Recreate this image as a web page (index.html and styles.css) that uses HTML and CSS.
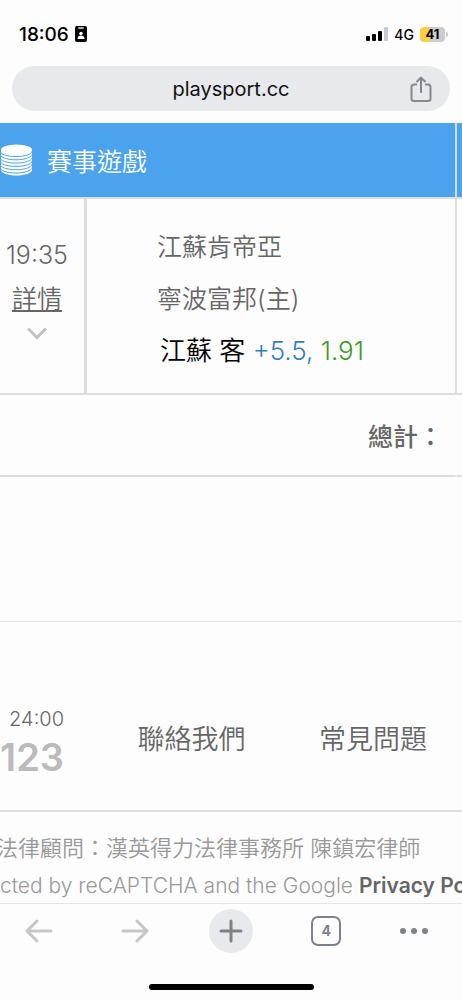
FILE: index.html
```
<!DOCTYPE html>
<html lang="zh-Hant">
<head>
    <meta charset="UTF-8">
    <meta name="viewport" content="width=device-width, initial-scale=1.0">
    <title>playsport.cc</title>
    <link rel="stylesheet" href="styles.css">
</head>
<body>
    <header class="status-bar">
        <div class="status-left">
            <span class="clock">18:06</span>
            <svg class="badge-icon" width="12" height="16" viewBox="0 0 12 16">
                <rect width="12" height="16" rx="2" fill="#000"/>
                <rect x="3" y="1" width="6" height="2" rx="1" fill="#aaa"/>
                <circle cx="6" cy="7.500" r="1.700" fill="#fff"/>
                <path d="M2.500 13c0-2.500 1.500-3.500 3.500-3.500s3.500 1 3.500 3.500z" fill="#fff"/>
            </svg>
        </div>
        <div class="status-right">
            <svg width="22" height="14" viewBox="0 0 22 14">
                <rect x="0" y="9" width="4" height="5" rx="1"/>
                <rect x="6" y="7" width="4" height="7" rx="1"/>
                <rect x="12" y="4" width="4" height="10" rx="1"/>
                <rect x="18" y="0" width="4" height="14" rx="1" fill="#ccc"/>
            </svg>
            <span class="network">4G</span>
            <span class="battery">41</span>
        </div>
    </header>

    <div class="address-bar">
        <span class="url">playsport.cc</span>
        <button type="button" class="share-btn" aria-label="分享">
            <svg width="22" height="26" viewBox="0 0 22 26" fill="none" stroke="#85898f" stroke-width="2">
                <path d="M7 8.500H4a2.500 2.500 0 0 0-2.500 2.500v11.500A2.500 2.500 0 0 0 4 25h14a2.500 2.500 0 0 0 2.500-2.500V11A2.500 2.500 0 0 0 18 8.500h-3M11 17V2M6.500 6 11 1.700 15.500 6"/>
            </svg>
        </button>
    </div>

    <main class="page">
        <table class="bets">
            <colgroup>
                <col class="col-time">
                <col>
                <col class="col-next">
            </colgroup>
            <thead>
                <tr>
                    <th colspan="2">
                        <div class="bets-title">
                            <svg width="32" height="32" viewBox="0 0 32 32">
                                <path d="M1 6v20c0 3 7 5.500 15.500 5.500S32 29 32 26V6z" fill="#fff"/>
                                <g fill="none" stroke="#4aa3ec" stroke-width="1">
                                    <path d="M0 7c0 3 7 5.500 16 5.500S32 10 32 7"/>
                                    <path d="M0 10.300c0 3 7 5.500 16 5.500s16-2.500 16-5.500"/>
                                    <path d="M0 13.600c0 3 7 5.500 16 5.500s16-2.500 16-5.500"/>
                                    <path d="M0 16.900c0 3 7 5.500 16 5.500s16-2.500 16-5.500"/>
                                    <path d="M0 20.200c0 3 7 5.500 16 5.500s16-2.500 16-5.500"/>
                                    <path d="M0 23.500c0 3 7 5.500 16 5.500s16-2.500 16-5.500"/>
                                </g>
                                <ellipse cx="16.500" cy="6" rx="15.500" ry="5.500" fill="#fff"/>
                            </svg>
                            <span>賽事遊戲</span>
                        </div>
                    </th>
                    <th></th>
                </tr>
            </thead>
            <tbody>
                <tr class="bet-row">
                    <td class="time-cell">
                        <div class="time">19:35</div>
                        <a href="#" class="detail-link">詳情</a>
                        <svg class="chevron" width="20" height="13" viewBox="0 0 20 13" fill="none" stroke="#c0c0c0" stroke-width="3">
                            <path d="M1 1.500 10 10.500 19 1.500"/>
                        </svg>
                    </td>
                    <td class="match-cell">
                        <div class="team">江蘇肯帝亞</div>
                        <div class="team">寧波富邦(主)</div>
                        <div class="pick">江蘇 客 <span class="spread">+5.5,</span> <span class="odds">1.91</span></div>
                    </td>
                    <td></td>
                </tr>
                <tr class="total-row">
                    <td colspan="2">總計：</td>
                    <td></td>
                </tr>
            </tbody>
        </table>

        <footer class="site-footer">
            <div class="footer-links">
                <div class="service">
                    <div class="hours">24:00</div>
                    <div class="phone">123</div>
                </div>
                <a href="#">聯絡我們</a>
                <a href="#">常見問題</a>
            </div>
            <div class="legal">
                <p class="counsel">法律顧問：漢英得力法律事務所 陳鎮宏律師</p>
                <p class="recaptcha">cted by reCAPTCHA and the Google <a href="#">Privacy Po</a></p>
            </div>
        </footer>
    </main>

    <nav class="toolbar">
        <button type="button" aria-label="返回">
            <svg width="28" height="24" viewBox="0 0 28 24" fill="none" stroke="#c6c7c9" stroke-width="3" stroke-linecap="round" stroke-linejoin="round">
                <path d="M26 12H2M12 2 2 12l10 10"/>
            </svg>
        </button>
        <button type="button" aria-label="前進">
            <svg width="28" height="24" viewBox="0 0 28 24" fill="none" stroke="#c6c7c9" stroke-width="3" stroke-linecap="round" stroke-linejoin="round">
                <path d="M2 12h24M16 2l10 10-10 10"/>
            </svg>
        </button>
        <button type="button" class="new-tab" aria-label="新分頁">
            <svg width="24" height="24" viewBox="0 0 24 24" fill="none" stroke="#7d828a" stroke-width="3" stroke-linecap="round">
                <path d="M2 12h20M12 2v20"/>
            </svg>
        </button>
        <button type="button" aria-label="分頁"><span class="tab-count">4</span></button>
        <button type="button" class="more" aria-label="更多">
            <svg width="28" height="6" viewBox="0 0 28 6" fill="#7d828a">
                <circle cx="3" cy="3" r="3"/>
                <circle cx="14" cy="3" r="3"/>
                <circle cx="25" cy="3" r="3"/>
            </svg>
        </button>
    </nav>
    <div class="home-indicator"></div>
</body>
</html>
```

FILE: styles.css
```
* {
    margin: 0;
    padding: 0;
    box-sizing: border-box;
}

body {
    font-family: Inter, "Noto Sans CJK TC", sans-serif;
    background: #fdfdfd;
    color: #666;
    min-height: 100vh;
    display: flex;
    flex-direction: column;
    overflow-x: hidden;
}

svg {
    display: block;
    flex-shrink: 0;
}

button {
    background: none;
    border: none;
    cursor: pointer;
}

a {
    color: inherit;
    text-decoration: none;
}

/* Status bar */
.status-bar {
    display: flex;
    justify-content: space-between;
    align-items: center;
    height: 66px;
    padding: 2px 17px 0 19px;
    color: #000;
}

.status-left,
.status-right {
    display: flex;
    align-items: center;
    gap: 6px;
}

.clock {
    font-size: 19px;
    font-weight: 500;
}

.network {
    font-size: 14px;
    font-weight: 500;
}

.battery {
    position: relative;
    width: 25px;
    border-radius: 4px;
    background: linear-gradient(90deg, #f8ce46 41%, #ccc 41%);
    font-size: 13px;
    font-weight: 700;
    line-height: 15px;
    text-align: center;
}

.battery::after {
    content: "";
    position: absolute;
    top: 5px;
    right: -3px;
    width: 2px;
    height: 5px;
    border-radius: 0 2px 2px 0;
    background: #ccc;
}

/* Address bar */
.address-bar {
    display: grid;
    grid-template-columns: 1fr auto 1fr;
    align-items: center;
    height: 45px;
    margin: 0 12px 12px;
    padding: 0 18px;
    border-radius: 24px;
    background: #e8e9ed;
}

.url {
    grid-column: 2;
    color: #111;
    font-size: 20px;
}

.share-btn {
    justify-self: end;
}

/* Bets table */
.page {
    flex: 1;
    display: flex;
    flex-direction: column;
    overflow: hidden;
}

.bets {
    width: 100%;
    table-layout: fixed;
    border-collapse: separate;
    border-spacing: 0;
    font-size: 25px;
    font-weight: 350;
}

.col-time {
    width: 87px;
}

.col-next {
    width: 5px;
}

.bets th,
.bets td {
    border-bottom: 2px solid #ddd;
}

.bets th {
    height: 76px;
    background: #4aa3ec;
    color: #fff;
    font-weight: 350;
}

.bets th:first-child,
.match-cell {
    border-right: 2px solid #ddd;
}

.bets-title {
    display: flex;
    align-items: center;
    gap: 15px;
}

.bet-row td {
    height: 196px;
    vertical-align: top;
}

.bets .time-cell {
    padding-top: 34px;
    padding-right: 10px;
    border-right: 3px solid #ddd;
    line-height: 44px;
    text-align: center;
}

.detail-link {
    text-decoration: underline;
    text-decoration-thickness: 2px;
    text-underline-offset: 2px;
}

.chevron {
    margin: 6px auto 0;
}

.bets .match-cell {
    padding: 22px 0 0 70px;
    line-height: 52px;
    white-space: nowrap;
}

.pick {
    padding-left: 3px;
    color: #000;
    font-size: 26px;
}

.spread {
    color: #337dc4;
}

.odds {
    color: #3e9b27;
}

.total-row td {
    height: 82px;
    padding-right: 12px;
    font-weight: 500;
    text-align: right;
}

.total-row td:first-child {
    border-right: 2px solid #fdfdfd;
}

/* Footer */
.site-footer {
    margin-top: 144px;
    border-top: 1px solid #e4e4e4;
}

.footer-links {
    display: flex;
    justify-content: space-between;
    height: 190px;
    padding: 83px 35px 0 0;
    border-bottom: 2px solid #ddd;
    font-size: 27px;
    font-weight: 350;
    line-height: 70px;
}

.service {
    width: 64px;
    text-align: right;
}

.hours {
    font-size: 20px;
    line-height: 28px;
}

.phone {
    color: #bbb;
    font-size: 38px;
    font-weight: 600;
    line-height: 48px;
}

.legal {
    padding-top: 16px;
    color: #999;
    white-space: nowrap;
}

.counsel {
    margin-left: -4px;
    font-size: 22px;
    font-weight: 350;
    line-height: 40px;
}

.recaptcha {
    font-size: 21px;
    font-weight: 300;
    line-height: 35px;
}

.recaptcha a {
    color: #666;
    font-weight: 600;
}

/* Bottom toolbar */
.toolbar {
    display: flex;
    justify-content: space-between;
    align-items: center;
    padding: 5px 34px 5px 17px;
    border-top: 1px solid #e4e4e4;
}

.toolbar button {
    display: flex;
    align-items: center;
    justify-content: center;
    width: 44px;
    height: 44px;
}

.toolbar .more {
    width: 28px;
}

.toolbar .new-tab {
    border-radius: 50%;
    background: #e8e9ed;
}

.tab-count {
    width: 30px;
    height: 30px;
    border: 2px solid #7d828a;
    border-radius: 7px;
    color: #7d828a;
    font-family: Inter, sans-serif;
    font-size: 14px;
    font-weight: 700;
    line-height: 26px;
}

.home-indicator {
    width: 165px;
    height: 6px;
    margin: 26px auto 10px;
    border-radius: 3px;
    background: #000;
}
```
